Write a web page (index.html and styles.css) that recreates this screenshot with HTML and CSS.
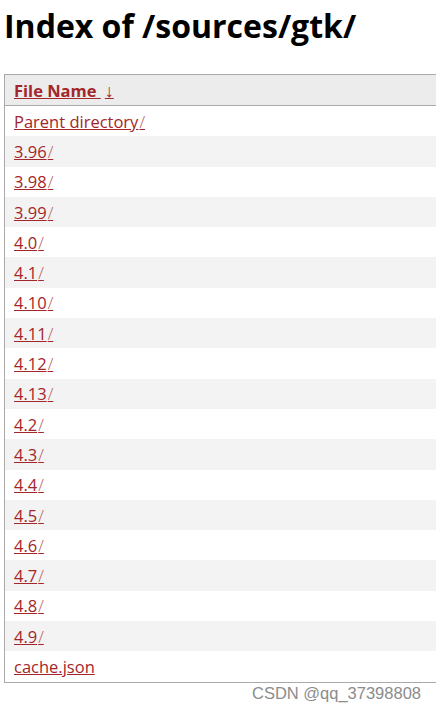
FILE: index.html
```html
<!DOCTYPE html>
<html>
<head>
<meta charset="utf-8">
<title>Index of /sources/gtk/</title>
<link rel="stylesheet" href="styles.css">
</head>
<body>
<h1 class="title">Index of /sources/gtk/</h1>
<div class="wrap">
<table class="list">
<thead>
<tr><th><a href="#">File Name <span class="arrow">↓</span></a></th></tr>
</thead>
<tbody>
<tr><td><a href="#">Parent directory<span class="sl">/</span></a></td></tr>
<tr><td><a href="#">3.96<span class="sl">/</span></a></td></tr>
<tr><td><a href="#">3.98<span class="sl">/</span></a></td></tr>
<tr><td><a href="#">3.99<span class="sl">/</span></a></td></tr>
<tr><td><a href="#">4.0<span class="sl">/</span></a></td></tr>
<tr><td><a href="#">4.1<span class="sl">/</span></a></td></tr>
<tr><td><a href="#">4.10<span class="sl">/</span></a></td></tr>
<tr><td><a href="#">4.11<span class="sl">/</span></a></td></tr>
<tr><td><a href="#">4.12<span class="sl">/</span></a></td></tr>
<tr><td><a href="#">4.13<span class="sl">/</span></a></td></tr>
<tr><td><a href="#">4.2<span class="sl">/</span></a></td></tr>
<tr><td><a href="#">4.3<span class="sl">/</span></a></td></tr>
<tr><td><a href="#">4.4<span class="sl">/</span></a></td></tr>
<tr><td><a href="#">4.5<span class="sl">/</span></a></td></tr>
<tr><td><a href="#">4.6<span class="sl">/</span></a></td></tr>
<tr><td><a href="#">4.7<span class="sl">/</span></a></td></tr>
<tr><td><a href="#">4.8<span class="sl">/</span></a></td></tr>
<tr><td><a href="#">4.9<span class="sl">/</span></a></td></tr>
<tr><td><a href="#">cache.json</a></td></tr>
</tbody>
</table>
</div>
<div class="watermark">CSDN @qq_37398808</div>
</body>
</html>
```

FILE: styles.css
```css
html, body {
  margin: 0;
  padding: 0;
  background: #fff;
}
body {
  padding-left: 4px;
  font-family: "Open Sans", "Noto Sans", sans-serif;
  overflow: hidden;
}
.title {
  font-size: 32px;
  font-weight: 700;
  line-height: 40px;
  margin: 6px 0 28px 0;
  color: #000;
  letter-spacing: 0;
}
.wrap {
  overflow: hidden;
}
.list {
  width: 520px;
  border-collapse: collapse;
  border: 1px solid #aaa;
  font-size: 16.5px;
}
.list th {
  background: #ececec;
  text-align: left;
  font-weight: 700;
  height: 30px;
  padding: 0 9px;
  border-bottom: 1px solid #aaa;
}
.list td {
  height: 30.3px;
  padding: 0 9px;
}
.list tbody tr:nth-child(even) td {
  background: #f3f3f3;
}
.list a {
  color: #a2262a;
  text-decoration: underline;
}
.sl {
  color: #b8585b;
  font-weight: 300;
  padding-left: 1px;
}
.arrow {
  padding-left: 4px;
  font-size: 18px;
}
.watermark {
  font-family: "Liberation Sans", Arial, sans-serif;
  font-size: 16.5px;
  color: #8c8c8c;
  text-align: right;
  padding-right: 15px;
  margin-top: 1px;
}
```
